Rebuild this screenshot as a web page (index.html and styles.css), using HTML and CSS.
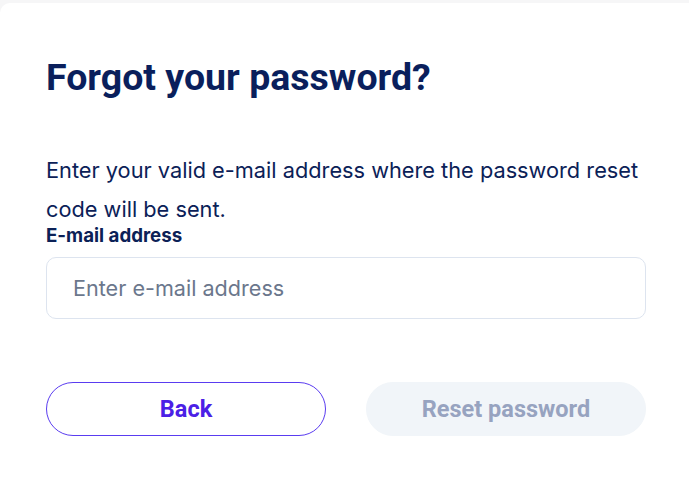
FILE: index.html
```html
<!DOCTYPE html>
<html lang="en">
<head>
<meta charset="utf-8">
<title>Forgot your password?</title>
<link rel="stylesheet" href="styles.css">
</head>
<body>
<main class="card">
  <h1 class="title">Forgot your password?</h1>
  <p class="intro">Enter your valid e-mail address where the password reset code will be sent.</p>
  <label class="label" for="email">E-mail address</label>
  <input class="input" id="email" type="email" placeholder="Enter e-mail address">
  <div class="actions">
    <button class="btn btn-outline" type="button">Back</button>
    <button class="btn btn-disabled" type="button" disabled>Reset password</button>
  </div>
</main>
</body>
</html>
```
FILE: styles.css
```css
html, body {
  margin: 0;
  padding: 0;
}
body {
  background: #f6f6f7;
  font-family: Inter, "Noto Sans", sans-serif;
  color: #0b2157;
  height: 481px;
  overflow: hidden;
}
.card {
  margin-top: 3px;
  background: #ffffff;
  border-radius: 10px 0 0 0;
  min-height: 478px;
  box-sizing: border-box;
  padding: 52px 43px 0 46px;
  display: flex;
  flex-direction: column;
}
.title {
  margin: 0;
  font-family: Roboto, "Liberation Sans", sans-serif;
  font-weight: 700;
  font-size: 37.5px;
  line-height: 44px;
  color: #0a1f5c;
}
.intro {
  margin: 52px 0 0;
  font-size: 21.75px;
  line-height: 39px;
  color: #0b2157;
}
.label {
  margin-top: -4px;
  font-size: 18.7px;
  font-weight: 700;
  line-height: 22px;
  color: #0b2157;
}
.input {
  margin-top: 10px;
  height: 62px;
  box-sizing: border-box;
  border: 1px solid #dde4ef;
  border-radius: 10px;
  padding: 0 26px;
  font-family: Inter, "Noto Sans", sans-serif;
  font-size: 21.6px;
  color: #0b2157;
  outline: none;
}
.input::placeholder {
  color: #6b778c;
}
.actions {
  margin-top: 63px;
  display: grid;
  grid-template-columns: 1fr 1fr;
  gap: 40px;
}
.btn {
  height: 54px;
  border-radius: 27px;
  font-family: Roboto, "Liberation Sans", sans-serif;
  font-weight: 700;
  font-size: 23.5px;
  cursor: pointer;
}
.btn-outline {
  background: #ffffff;
  border: 1px solid #5a3cf0;
  color: #4b20e6;
}
.btn-disabled {
  background: #f1f5f9;
  border: 1px solid #f1f5f9;
  color: #97a3c0;
  cursor: default;
}
```
